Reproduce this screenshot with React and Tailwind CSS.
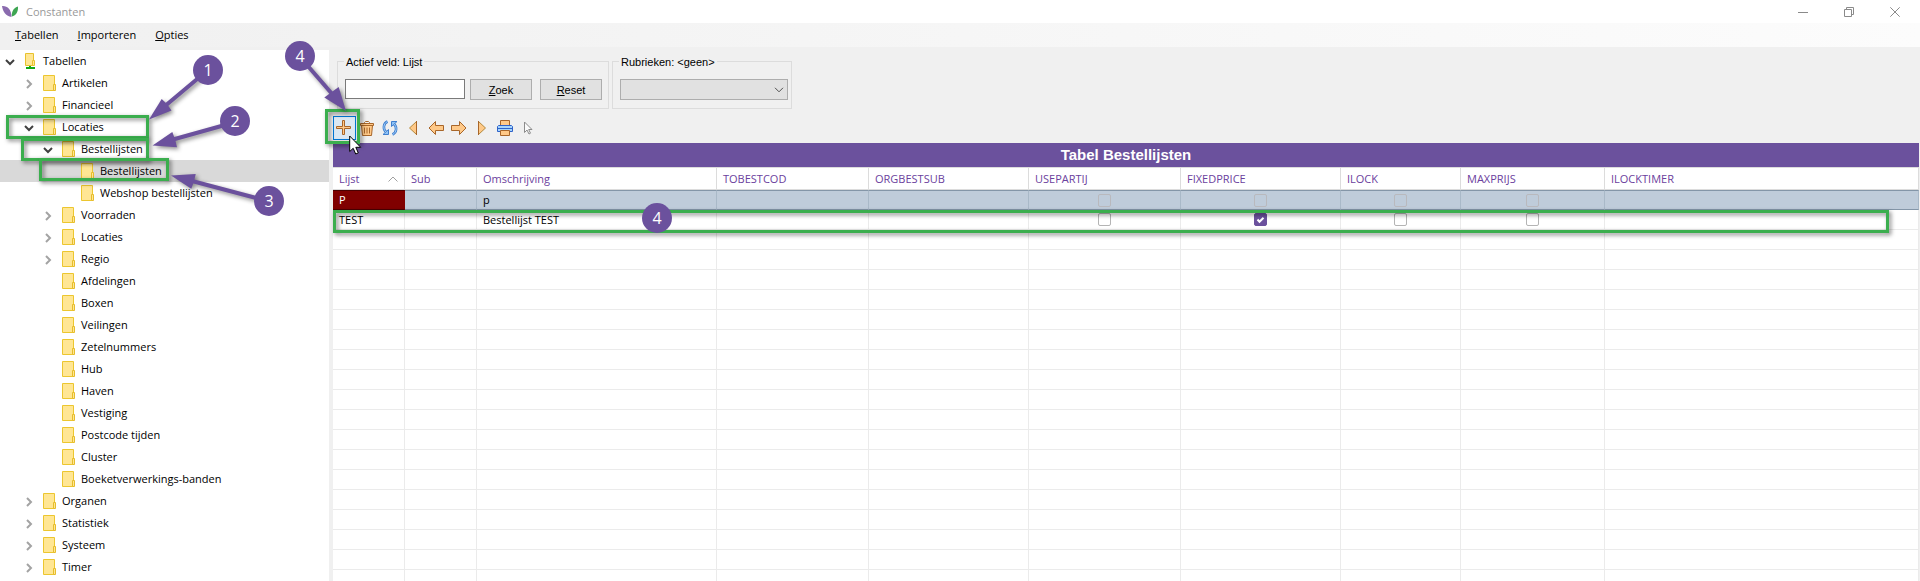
import React from "react";

const TREE = [
  { level: 0, label: "Tabellen", state: "open", root: true },
  { level: 1, label: "Artikelen", state: "closed" },
  { level: 1, label: "Financieel", state: "closed" },
  { level: 1, label: "Locaties", state: "open" },
  { level: 2, label: "Bestellijsten", state: "open" },
  { level: 3, label: "Bestellijsten", selected: true },
  { level: 3, label: "Webshop bestellijsten" },
  { level: 2, label: "Voorraden", state: "closed" },
  { level: 2, label: "Locaties", state: "closed" },
  { level: 2, label: "Regio", state: "closed" },
  { level: 2, label: "Afdelingen" },
  { level: 2, label: "Boxen" },
  { level: 2, label: "Veilingen" },
  { level: 2, label: "Zetelnummers" },
  { level: 2, label: "Hub" },
  { level: 2, label: "Haven" },
  { level: 2, label: "Vestiging" },
  { level: 2, label: "Postcode tijden" },
  { level: 2, label: "Cluster" },
  { level: 2, label: "Boeketverwerkings-banden" },
  { level: 1, label: "Organen", state: "closed" },
  { level: 1, label: "Statistiek", state: "closed" },
  { level: 1, label: "Systeem", state: "closed" },
  { level: 1, label: "Timer", state: "closed" },
];

const INDENT = ["pl-0", "pl-[19px]", "pl-[38px]", "pl-[57px]"];

const COLUMNS = [
  { name: "Lijst", width: "w-[72px]", sorted: true },
  { name: "Sub", width: "w-[72px]" },
  { name: "Omschrijving", width: "w-[240px]" },
  { name: "TOBESTCOD", width: "w-[152px]" },
  { name: "ORGBESTSUB", width: "w-[160px]" },
  { name: "USEPARTIJ", width: "w-[152px]", check: true },
  { name: "FIXEDPRICE", width: "w-[160px]", check: true },
  { name: "ILOCK", width: "w-[120px]", check: true },
  { name: "MAXPRIJS", width: "w-[144px]", check: true },
  { name: "ILOCKTIMER", width: "w-auto" },
];

const EMPTY_ROWS = Array.from({ length: 18 }, (_, i) => i);

function Chevron({ state }) {
  if (state === "open") {
    return (
      <svg width="10" height="8" viewBox="0 0 10 8" fill="none" stroke="#404040" strokeWidth="2">
        <path d="M1 2l4 4 4-4" />
      </svg>
    );
  }
  if (state === "closed") {
    return (
      <svg width="8" height="10" viewBox="0 0 8 10" fill="none" stroke="#a3a3a3" strokeWidth="2">
        <path d="M2 1l4 4-4 4" />
      </svg>
    );
  }
  return null;
}

function FolderIcon({ root }) {
  if (root) {
    return (
      <svg width="13" height="16" viewBox="0 0 13 16">
        <path d="M1.500.5h8v12h-8z" fill="#ffe694" stroke="#e8c22e" />
        <path d="M8.500 7.500h2v5h-2z" fill="#ffe694" stroke="#e8c22e" />
        <path d="M6 13v2M2 15h9" stroke="#12a812" strokeWidth="2" fill="none" />
      </svg>
    );
  }
  return (
    <svg width="13" height="16" viewBox="0 0 13 16">
      <path d="M.5.5h11v15H.5z" fill="#ffe694" stroke="#ecc62f" />
      <path d="M10.500 9.500h2v6h-2z" fill="#ffe694" stroke="#e6bd2c" />
    </svg>
  );
}

function Tree() {
  return (
    <nav aria-label="Tabellen" className="w-[329px] shrink-0 overflow-hidden bg-white">
      <ul>
        {TREE.map((n, i) => (
          <li key={i}>
            <button
              type="button"
              className={`flex h-[22px] w-full items-center text-left ${INDENT[n.level]} ${n.selected ? "bg-[#d9d9d9]" : ""}`}
            >
              <span className="flex w-[20px] justify-center pt-px">
                <Chevron state={n.state} />
              </span>
              <span className="ml-1 w-[13px]">
                <FolderIcon root={n.root} />
              </span>
              <span className="ml-1.5 whitespace-nowrap leading-[18px]">{n.label}</span>
            </button>
          </li>
        ))}
      </ul>
    </nav>
  );
}

function ToolButton({ label, active, children }) {
  return (
    <button
      type="button"
      aria-label={label}
      className={`flex h-6 w-[23px] items-center justify-center pr-px ${active ? "border border-[#0078d7] bg-[#dbe8f3]" : ""}`}
    >
      {children}
    </button>
  );
}

const ORANGE = { fill: "#ffc988", stroke: "#a8662a", strokeLinejoin: "miter" };

function Toolbar() {
  return (
    <div role="toolbar" className="flex h-[34px] items-start pt-[7px]">
      <ToolButton label="Toevoegen" active>
        <svg width="16" height="16" viewBox="0 0 16 16" className="shrink-0">
          <path d="M6.500.5h2v6h6v2h-6v6h-2v-6h-6v-2h6z" {...ORANGE} />
        </svg>
      </ToolButton>
      <ToolButton label="Verwijderen">
        <svg width="14" height="16" viewBox="0 0 14 16">
          <path d="M1.500 5.500h11l-1 10h-9z" {...ORANGE} />
          <path d="M.5 3.500h13v2H.5z" {...ORANGE} />
          <path d="M4.500 3.500v-1l1-1h3l1 1v1M4.500 7.500v6M7 7.500v6M9.500 7.500v6" fill="none" stroke="#a8662a" />
        </svg>
      </ToolButton>
      <ToolButton label="Vernieuwen">
        <svg width="16" height="16" viewBox="0 0 16 16" fill="none">
          <path d="M5.500 1.500C1.200 3.500.8 9 4 12M10.500 14.500C14.800 12.500 15.200 7 12 4" stroke="#3f7fcf" strokeWidth="2.600" />
          <path d="M1 14.500h5.500V9.500zM15 1.500H9.500v5z" fill="#8fc3f5" stroke="#3f7fcf" />
          <path d="M5.500 1.500C1.200 3.500.8 9 4 12M10.500 14.500C14.800 12.500 15.200 7 12 4" stroke="#a4d0fa" />
        </svg>
      </ToolButton>
      <ToolButton label="Eerste">
        <svg width="10" height="16" viewBox="0 0 10 16">
          <path d="M8.500 1.500v13L1.500 8z" fill="#ffc988" stroke="#b58a3c" />
          <path d="M8.500 1v14" stroke="#a8662a" />
        </svg>
      </ToolButton>
      <ToolButton label="Vorige">
        <svg width="16" height="16" viewBox="0 0 16 16">
          <path d="M1 8l6.500-6.500v4h8v5h-8v4z" {...ORANGE} />
        </svg>
      </ToolButton>
      <ToolButton label="Volgende">
        <svg width="16" height="16" viewBox="0 0 16 16">
          <path d="M15 8L8.500 1.500v4h-8v5h8v4z" {...ORANGE} />
        </svg>
      </ToolButton>
      <ToolButton label="Laatste">
        <svg width="10" height="16" viewBox="0 0 10 16">
          <path d="M1.500 1.500v13l7-6.500z" fill="#ffc988" stroke="#b58a3c" />
          <path d="M1.500 1v14" stroke="#a8662a" />
        </svg>
      </ToolButton>
      <ToolButton label="Afdrukken">
        <svg width="16" height="16" viewBox="0 0 16 16">
          <path d="M3.500.5h9v5h-9z" {...ORANGE} />
          <path d="M1.500 5.500h13l1 1v5h-15v-5z" fill="#a5d4fb" stroke="#2f62c9" />
          <path d="M1 8.500h14" stroke="#2f62c9" />
          <path d="M3.500 10.500h9v5h-9z" {...ORANGE} />
        </svg>
      </ToolButton>
      <ToolButton label="Selecteren">
        <svg width="10" height="14" viewBox="0 0 10 14">
          <path d="M1.500 1v10.500l2.500-2.500 2 4 1.500-.8-1.800-3.700H9z" fill="#fafafa" stroke="#8c8c8c" />
        </svg>
      </ToolButton>
    </div>
  );
}

const GROUP = "relative h-12 border border-[#dcdcdc] pl-[7px] pr-[3px] pt-[17px]";
const PUSH = "h-[21px] w-[62px] border border-[#adadad] bg-[#e1e1e1] leading-[18px]";

function Filters() {
  return (
    <div className="flex gap-[3px] pl-1 pt-[11px] font-['Liberation_Sans',sans-serif] text-[11px]">
      <div role="group" className={`${GROUP} flex w-[272px]`}>
        <label htmlFor="veld" className="absolute -top-2 left-[6px] bg-[#f0f0f0] px-0.5 leading-[16px]">
          Actief veld: Lijst
        </label>
        <input id="veld" type="text" className="h-5 w-[120px] border border-[#7a7a7a] bg-white px-1 outline-none" />
        <button type="button" className={`${PUSH} ml-[5px]`}>
          <u>Z</u>oek
        </button>
        <button type="button" className={`${PUSH} ml-2`}>
          <u>R</u>eset
        </button>
      </div>
      <div role="group" className={`${GROUP} w-[180px]`}>
        <label htmlFor="rubriek" className="absolute -top-2 left-[6px] bg-[#f0f0f0] px-0.5 leading-[16px]">
          Rubrieken: &lt;geen&gt;
        </label>
        <div className="relative">
          <select id="rubriek" className="block h-[21px] w-full appearance-none border border-[#adadad] bg-[#e1e1e1]" />
          <svg width="10" height="6" viewBox="0 0 10 6" fill="none" stroke="#505050" className="pointer-events-none absolute right-1 top-2">
            <path d="M1 .8l4 4 4-4" />
          </svg>
        </div>
      </div>
    </div>
  );
}

function Check({ label, checked, dim }) {
  return (
    <span className="relative mx-auto block size-[13px]">
      <input
        type="checkbox"
        aria-label={label}
        defaultChecked={checked}
        className={`block size-[13px] appearance-none rounded-[2px] border checked:border-[#6b519d] checked:bg-[#6b519d] ${dim ? "border-[#b9b9bd]" : "border-[#b4b4b4] bg-white"}`}
      />
      {checked && (
        <svg width="13" height="13" viewBox="0 0 13 13" fill="none" stroke="#fff" strokeWidth="2" className="pointer-events-none absolute inset-0">
          <path d="M3.500 6.500l2 2.200 4-4" />
        </svg>
      )}
    </span>
  );
}

function Grid() {
  const cell = "h-5 border-b border-r border-[#ebebeb] p-0 px-1.5 leading-[18px] whitespace-nowrap";
  const sel = "h-5 border-y border-r border-y-[#8496a8] border-r-[#a9b9c8] p-0 px-1.5 leading-[18px]";
  return (
    <section className="mr-px min-h-0 flex-1 overflow-hidden bg-white">
      <h1 className="h-6 bg-[#6b519d] text-center font-['Liberation_Sans',sans-serif] text-[15px] font-bold leading-6 text-white">
        Tabel Bestellijsten
      </h1>
      <table className="w-full table-fixed border-separate border-spacing-0 border-t border-[#dcdcdc]">
        <thead>
          <tr>
            {COLUMNS.map((c) => (
              <th
                key={c.name}
                scope="col"
                className={`${c.width} h-[22px] border-b border-r border-[#dcdcdc] p-0 px-1.5 text-left font-normal leading-[20px] text-[#6b419d]`}
              >
                <span className="flex items-center justify-between">
                  {c.name}
                  {c.sorted && (
                    <svg width="10" height="6" viewBox="0 0 10 6" fill="none" stroke="#a0a0a0">
                      <path d="M.5 5.500L5 1l4.500 4.500" />
                    </svg>
                  )}
                </span>
              </th>
            ))}
          </tr>
        </thead>
        <tbody>
          <tr className="bg-[#bfccda]">
            {COLUMNS.map((c, i) => (
              <td key={c.name} className={i === 0 ? "h-5 border-y border-r border-y-[#4a0000] border-r-[#800000] bg-[#800000] p-0 px-1.5 leading-[18px] text-white" : sel}>
                {i === 0 && "P"}
                {i === 2 && "p"}
                {c.check && <Check label={c.name} dim />}
              </td>
            ))}
          </tr>
          <tr>
            {COLUMNS.map((c, i) => (
              <td key={c.name} className={cell}>
                {i === 0 && "TEST"}
                {i === 2 && "Bestellijst TEST"}
                {c.check && <Check label={c.name} checked={c.name === "FIXEDPRICE"} />}
              </td>
            ))}
          </tr>
          {EMPTY_ROWS.map((r) => (
            <tr key={r}>
              {COLUMNS.map((c) => (
                <td key={c.name} className={cell} />
              ))}
            </tr>
          ))}
        </tbody>
      </table>
    </section>
  );
}

const FRAME = "absolute border-[3px] border-[#3bae4e] drop-shadow-[2px_2px_2px_rgba(0,0,0,0.5)]";
const BADGE =
  "absolute flex size-[30px] items-center justify-center rounded-full bg-[#6b519d] text-[16px] leading-[20px] text-white";

function Annotations() {
  return (
    <div className="pointer-events-none absolute inset-0">
      <div className={`${FRAME} left-[6px] top-[115px] h-6 w-[143px]`} />
      <div className={`${FRAME} left-[21px] top-[138px] h-[23px] w-[128px]`} />
      <div className={`${FRAME} left-[39px] top-[158px] h-[23px] w-[130px]`} />
      <div className={`${FRAME} left-[325px] top-[109px] h-[35px] w-[35px]`} />
      <div className={`${FRAME} left-[333px] right-[31px] top-[210px] h-[23px]`} />
      <svg
        width="360"
        height="220"
        viewBox="0 0 360 220"
        className="absolute left-0 top-0 drop-shadow-[2px_2px_2px_rgba(0,0,0,0.45)]"
        fill="#6b519d"
        stroke="#6b519d"
      >
        <g strokeWidth="4" fill="none">
          <path d="M202 75L165 106M225 125L173 139.500M260 199L192 181M307 65L333 95" />
        </g>
        <g stroke="none">
          <path d="M149 119.500L161.700 99 167 104l4.500 6.500z" />
          <path d="M152.500 145.500L172.300 132l2.700 7 2 8.300z" />
          <path d="M171 175.500l24.700-1.500-1.700 7.500-2.700 7.300z" />
          <path d="M346 111l-21.700-13.500 7.400-5.500 7-5z" />
        </g>
      </svg>
      <svg width="13" height="20" viewBox="0 0 13 20" className="absolute left-[349px] top-[135px]">
        <path d="M.7 1v15.500l3.500-3.200 2.500 5.700 2.600-1.100L6.800 12.300h4.900z" fill="#fff" stroke="#000" />
      </svg>
      <span className={`${BADGE} left-[193px] top-[55px]`}>1</span>
      <span className={`${BADGE} left-[220px] top-[106px]`}>2</span>
      <span className={`${BADGE} left-[254px] top-[186px]`}>3</span>
      <span className={`${BADGE} left-[285px] top-[41px]`}>4</span>
      <span className={`${BADGE} left-[642px] top-[203px]`}>4</span>
    </div>
  );
}

export default function App() {
  return (
    <div className="relative flex h-screen flex-col overflow-hidden bg-[#f0f0f0] font-['Open_Sans','Noto_Sans',sans-serif] text-[11px] text-black">
      <header className="flex h-[23px] shrink-0 items-center bg-white pl-0.5 text-[#999]">
        <svg width="17" height="13" viewBox="0 0 17 13">
          <path d="M0 1c5-.5 9.500 3 9.500 11C4 11 1 7.500 0 1z" fill="#8a6bae" />
          <path d="M9.800 11.500C9.500 6 12 2.500 16 1.500c.4 5-1.800 8.800-6.200 10z" fill="#3da552" />
        </svg>
        <span className="ml-[7px] flex-1 leading-[18px]">Constanten</span>
        <div className="flex gap-9 pr-5 text-[#8a8a8a]">
          <button type="button" aria-label="Minimaliseren">
            <svg width="10" height="10" viewBox="0 0 10 10" fill="none" stroke="currentColor">
              <path d="M0 5.500h10" />
            </svg>
          </button>
          <button type="button" aria-label="Verkleinen">
            <svg width="10" height="10" viewBox="0 0 10 10" fill="none" stroke="currentColor">
              <path d="M.5 2.500h7v7h-7zM2.500 2.500v-2h7v7h-2" />
            </svg>
          </button>
          <button type="button" aria-label="Sluiten">
            <svg width="10" height="10" viewBox="0 0 10 10" fill="none" stroke="currentColor">
              <path d="M.3.3l9.400 9.400M9.700.3L.3 9.700" />
            </svg>
          </button>
        </div>
      </header>
      <div role="menubar" className="flex h-6 shrink-0 items-center gap-[19px] bg-linear-to-r from-[#f0f0f0] to-[#fcfcfc] pl-[15px]">
        <button type="button" role="menuitem"><u>T</u>abellen</button>
        <button type="button" role="menuitem"><u>I</u>mporteren</button>
        <button type="button" role="menuitem"><u>O</u>pties</button>
      </div>
      <div className="flex min-h-0 flex-1 gap-1 pt-[3px]">
        <Tree />
        <main className="flex min-w-0 flex-1 flex-col">
          <Filters />
          <Toolbar />
          <Grid />
        </main>
      </div>
      <Annotations />
    </div>
  );
}
